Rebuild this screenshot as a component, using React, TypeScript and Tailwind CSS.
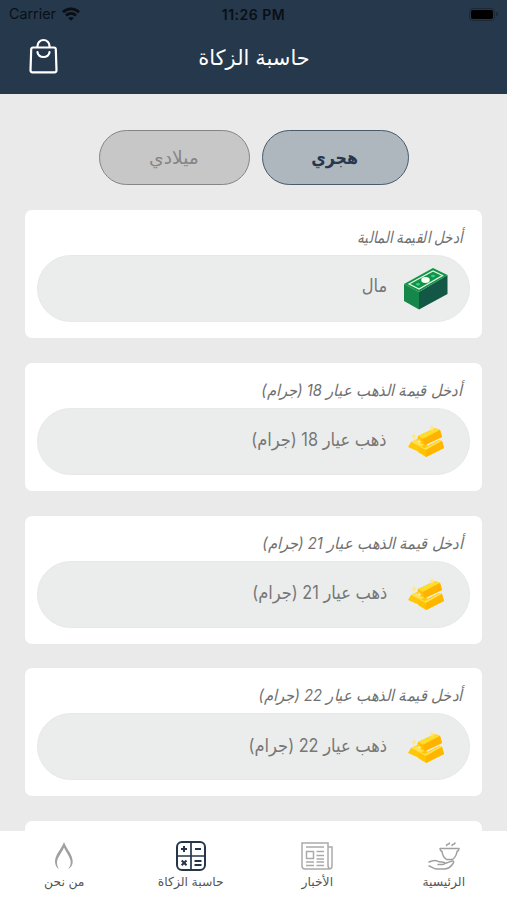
import type { ReactNode } from "react";

const fields = [
  { label: "أدخل القيمة المالية", placeholder: "مال", icon: "cash" },
  { label: "أدخل قيمة الذهب عيار 18 (جرام)", placeholder: "ذهب عيار 18 (جرام)", icon: "gold" },
  { label: "أدخل قيمة الذهب عيار 21 (جرام)", placeholder: "ذهب عيار 21 (جرام)", icon: "gold" },
  { label: "أدخل قيمة الذهب عيار 22 (جرام)", placeholder: "ذهب عيار 22 (جرام)", icon: "gold" },
];

function WifiIcon() {
  return (
    <svg width="18" height="14" viewBox="0 0 18 14" fill="none" stroke="#0a0f16" strokeWidth="2.8">
      <path d="M1 5.2C5.6.7 12.4.7 17 5.2" />
      <path d="M4 8.600c2.900-2.800 7.100-2.800 10 0" />
      <path d="M9 13.800 6.200 11c1.600-1.500 4-1.500 5.600 0Z" fill="#0a0f16" stroke="none" />
    </svg>
  );
}

function BagIcon() {
  return (
    <svg width="30" height="36" viewBox="0 0 30 36" fill="none" stroke="#fff" strokeWidth="2.2" strokeLinecap="round" strokeLinejoin="round">
      <path d="M4 9.500h21a1.800 1.800 0 0 1 1.800 1.800l.7 21a2 2 0 0 1-2 2h-22a2 2 0 0 1-2-2l.7-21A1.800 1.800 0 0 1 4 9.500Z" />
      <path d="M8.500 9V8a6 6 0 0 1 12 0v1M8.500 14a6 5 0 0 0 12 0" />
    </svg>
  );
}

function CashIcon() {
  return (
    <svg width="44" height="42" viewBox="0 0 44 42">
      <path d="M0 16 15 24v17.500L0 33Z" fill="#16874a" />
      <path d="M15 24 43.500 7v19L15 41.500Z" fill="#135847" />
      <path d="M0 16 29 0l14.500 7L15 24Z" fill="#119447" />
      <path d="M5 16 29 3l9.500 4.500L15 21Z" fill="none" stroke="#e3f4df" strokeWidth="1.300" />
      <ellipse cx="21.500" cy="12" rx="4.300" ry="3" fill="#f5fff4" />
      <ellipse cx="14" cy="16.300" rx="2" ry="1.300" fill="#36ce91" />
      <ellipse cx="29" cy="8" rx="2" ry="1.300" fill="#36ce91" />
    </svg>
  );
}

function GoldIcon() {
  return (
    <svg width="36" height="34" viewBox="0 0 36 34">
      {/* back left bar */}
      <path d="m3 18 6-3 10 4-1 10-9-2-9-4Z" fill="#ffc60a" />
      <path d="m3 18 6-3 9 4-5 4Z" fill="#ffe04a" />
      {/* top bar */}
      <path d="m10 12 17-8 5 2 2 7-17 8-8-4Z" fill="#ffbf00" />
      <path d="m10 12 17-8 5 2-17 9Z" fill="#ffdc26" />
      <path d="m15 15 17-9 2 7-17 8Z" fill="#ffb300" />
      {/* front bar */}
      <path d="m17 23 14-7 3 1 2 7-18 9-8-5 2-6Z" fill="#ffc400" />
      <path d="m12 22 5 2 15-8 2 1-16 9-6-3Z" fill="#ffe04a" />
      <path d="m18 26 16-9 2 7-18 9Z" fill="#ffb600" />
      <path d="m24 0 .8 3 2.700 1-2.700 1-.8 3-.8-3-2.700-1 2.700-1ZM6 8l.8 3 2.700 1-2.700 1L6 16l-.8-3-2.700-1 2.700-1ZM11 14l.8 2.500 2.200 1-2.200 1L11 21l-.8-2.500-2.200-1 2.200-1Z" fill="#ffe68a" />
    </svg>
  );
}

function FlameIcon() {
  return (
    <svg width="20" height="28" viewBox="0 0 20 28" fill="#a0a0a0">
      <path d="M10 0C7.500 7 1 12.500 1 19.500c0 3.200 1.400 6 4 7.500-1.500-2.400-2.500-5-1.800-8.500C4.300 14.500 8.500 9.500 10 5.500c1.500 4 5.500 8.500 6.500 13 .7 3.400-.3 6.200-2.500 8.500 3.200-1.300 4.700-4 4.700-7.500C18.700 12.500 12.500 7 10 0Z" />
    </svg>
  );
}

function CalculatorIcon() {
  return (
    <svg width="30" height="30" viewBox="0 0 30 30" fill="none" stroke="#25364a" strokeWidth="2">
      <rect x="1" y="1" width="28" height="28" rx="5" />
      <path d="M15 1v28M1 15h28" strokeWidth="1.700" />
      <path d="M5 8h6M8 5v6M19 8h6M5.700 19.500l4.800 4.800M10.500 19.500l-4.800 4.800M18.500 20h7M18.500 24h7" />
    </svg>
  );
}

function NewsIcon() {
  return (
    <svg width="32" height="28" viewBox="0 0 32 28" fill="none" stroke="#aaa" strokeWidth="1.500">
      <path d="M27 23V1H1v23a3 3 0 0 0 3 3h24a3 3 0 0 0 3-3V5h-4v18c0 2 .8 3.500 2 4" />
      <path d="M5 5h18M15.500 9.500H23M15.500 13.500H23M15.500 17H23M5 20h8M15.500 20H23M5 23.500h8M15.500 23.500H23" />
      <path d="M5.500 9.500h7v7h-7Z" />
    </svg>
  );
}

function CharityIcon() {
  return (
    <svg width="32" height="28" viewBox="0 0 32 28" fill="none" stroke="#a0a0a0" strokeWidth="1.500" strokeLinecap="round" strokeLinejoin="round">
      <path d="M12 6.500h19c0 2-.7 2.500-2 3-.5 4-2 6-4.500 8h-6c-3-2-4-4-4.500-8-1.300-.5-2-1-2-3ZM18.500 3.500c.5-2 2.500-.5 3-2.500M24 3.500c.5-2 2.500-.5 3-2.500" />
      <path d="M1 20c3-1.500 6-2.500 9-.7 2 1 5 .2 6.500 1.200 1 1-.5 2-2 2H10M16.500 21.500c3-.5 5-2 7.500-2.500 2-.2 2 1 1 2.500-2 3-5 5.500-9 5.500H8c-3-.5-4-2-7-3" />
    </svg>
  );
}

function Tab({ icon, label }: { icon: ReactNode; label: string }) {
  return (
    <button className="flex w-[126.500px] flex-col items-center pt-2.5">
      <span className="flex h-[30px] items-center">{icon}</span>
      <span className="mt-0.5 text-[12.400px] leading-[18px] whitespace-nowrap text-[#555]">{label}</span>
    </button>
  );
}

export default function App() {
  return (
    <div dir="rtl" className="flex h-[900px] w-[507px] flex-col overflow-hidden bg-[#eaeaea] font-['Inter','DejaVu_Sans',sans-serif]">
      <header className="h-[94px] shrink-0 bg-[#26384c]">
        <div dir="ltr" className="grid h-7 grid-cols-3 items-center px-[9px] text-[14px] text-[#0a0f16]">
          <div className="flex items-center gap-1.5">
            <span className="text-[14.300px]">Carrier</span>
            <WifiIcon />
          </div>
          <span className="text-center text-[14px] font-semibold tracking-[0.500px] whitespace-nowrap">11:26 PM</span>
          <div className="flex items-center justify-end gap-px">
            <span className="h-[13px] w-[26px] rounded-[4px] border border-[#1b2937] p-px">
              <span className="block h-full rounded-[2px] bg-black" />
            </span>
            <span className="h-1 w-0.5 rounded-r bg-[#1b2937]" />
          </div>
        </div>
        <div dir="ltr" className="grid h-[56px] grid-cols-[1fr_auto_1fr] items-center">
          <button className="ml-[29px] w-[30px]"><BagIcon /></button>
          <h1 dir="rtl" className="pt-1 pl-px text-[21px] text-white">حاسبة الزكاة</h1>
        </div>
      </header>

      <main className="min-h-0 flex-1 overflow-hidden px-[25px] pt-9">
        <div className="flex justify-center gap-3">
          <button className="h-[55px] w-[147px] rounded-full border-[1.500px] border-[#465b6c] bg-[#aeb6be] text-[18px] font-bold text-[#26384c]">
            <span className="inline-block scale-x-[.88]">هجري</span>
          </button>
          <button className="h-[55px] w-[151px] rounded-full border-[1.500px] border-[#858585] bg-[#c7c7c7] text-[18px] text-[#858585]">
            <span className="inline-block scale-x-[1.040]">ميلادي</span>
          </button>
        </div>
        <div className="mt-[25px] flex flex-col gap-[24.750px]">
          {fields.map((field) => (
            <section key={field.label} className="h-32 shrink-0 rounded-[7px] bg-white px-3 pt-[15px]">
              <p className="h-[30px] pr-2 text-[16px] leading-[24px] whitespace-nowrap text-[#707070] italic">
                <span className={`inline-block origin-right ${field.icon === "cash" ? "scale-x-[.850]" : "scale-x-[.925]"}`}>{field.label}</span>
              </p>
              <div className="flex h-[67px] items-center rounded-full border border-[#e7e9e9] bg-[#ebeded] pr-[21px]">
                <span className="flex w-[44px] justify-center">
                  {field.icon === "cash" ? <CashIcon /> : <GoldIcon />}
                </span>
                <span className={`mr-[17px] inline-block origin-right scale-x-[.905] text-[18px] whitespace-nowrap text-[#777] ${field.icon === "cash" ? "pb-[7px]" : "pb-[3px]"}`}>
                  {field.placeholder}
                </span>
              </div>
            </section>
          ))}
          <section className="h-32 shrink-0 rounded-[7px] bg-white" />
        </div>
      </main>

      <nav className="flex h-[69px] shrink-0 bg-white">
        <Tab icon={<CharityIcon />} label="الرئيسية" />
        <Tab icon={<NewsIcon />} label="الأخبار" />
        <Tab icon={<CalculatorIcon />} label="حاسبة الزكاة" />
        <Tab icon={<FlameIcon />} label="من نحن" />
      </nav>
    </div>
  );
}
